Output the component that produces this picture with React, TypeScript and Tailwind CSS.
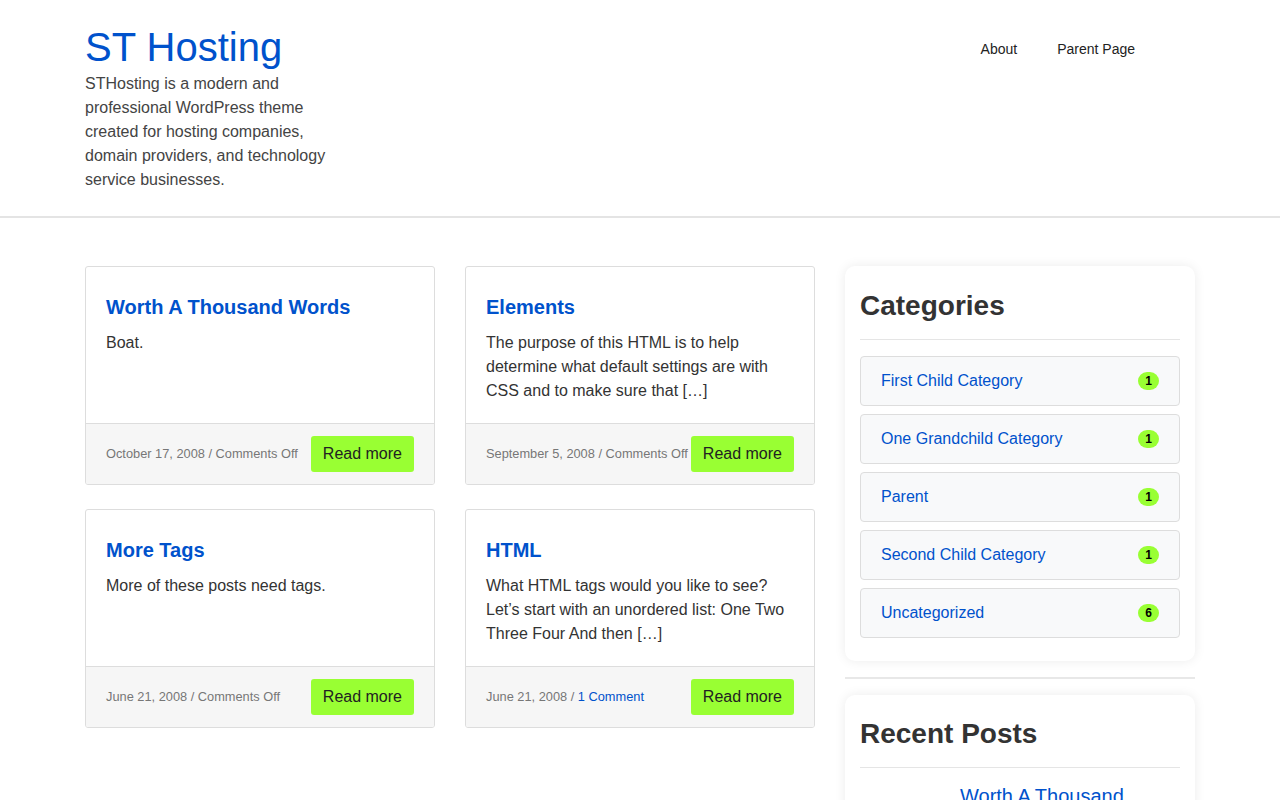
// App.tsx — ST Hosting blog index
const posts = [
  {
    title: 'Worth A Thousand Words',
    excerpt: 'Boat.',
    date: 'October 17, 2008',
    comments: 'Comments Off',
    link: false,
  },
  {
    title: 'Elements',
    excerpt:
      'The purpose of this HTML is to help determine what default settings are with CSS and to make sure that […]',
    date: 'September 5, 2008',
    comments: 'Comments Off',
    link: false,
  },
  {
    title: 'More Tags',
    excerpt: 'More of these posts need tags.',
    date: 'June 21, 2008',
    comments: 'Comments Off',
    link: false,
  },
  {
    title: 'HTML',
    excerpt:
      'What HTML tags would you like to see? Let’s start with an unordered list: One Two Three Four And then […]',
    date: 'June 21, 2008',
    comments: '1 Comment',
    link: true,
  },
];

const categories = [
  { name: 'First Child Category', count: 1 },
  { name: 'One Grandchild Category', count: 1 },
  { name: 'Parent', count: 1 },
  { name: 'Second Child Category', count: 1 },
  { name: 'Uncategorized', count: 6 },
];

function PostCard({ post }: { post: (typeof posts)[number] }) {
  return (
    <article className="flex flex-col border border-[#dddddd] rounded-[3px] bg-white overflow-hidden">
      <div className="flex-1 px-5 pt-[28px] pb-[20px]">
        <h2 className="text-[20px] leading-[24px] font-bold text-[#0052cc] mb-[12px]">
          {post.title}
        </h2>
        <p className="text-[16px] leading-[24px] text-[#333333]">{post.excerpt}</p>
      </div>
      <div className="flex items-center justify-between bg-[#f6f6f6] border-t border-[#dddddd] px-5 py-3">
        <span className="text-[12.8px] text-[#777777] whitespace-nowrap">
          {post.date} /{' '}
          {post.link ? (
            <a className="text-[#0052cc]">{post.comments}</a>
          ) : (
            post.comments
          )}
        </span>
        <button
          type="button"
          className="h-9 px-3 shrink-0 whitespace-nowrap rounded-[3px] bg-[#99ff33] text-[16px] text-[#222222]"
        >
          Read more
        </button>
      </div>
    </article>
  );
}

export default function App() {
  return (
    <div className="min-h-screen bg-white font-['Liberation_Sans',Arial,sans-serif] text-[#333333]">
      {/* header */}
      <header className="border-b-2 border-[#e4e4e4]">
        <div className="mx-auto w-[1110px] flex justify-between pt-[23px] pb-[24px]">
          <div className="w-[260px]">
            <a className="block text-[40px] leading-[48px] text-[#0052cc]">ST Hosting</a>
            <p className="text-[16px] leading-[24px] text-[#444444] mt-px">
              STHosting is a modern and professional WordPress theme created for hosting
              companies, domain providers, and technology service businesses.
            </p>
          </div>
          <nav className="flex gap-10 text-[14px] text-[#222222] pt-4 pr-[60px] h-fit">
            <a>About</a>
            <a>Parent Page</a>
          </nav>
        </div>
      </header>

      {/* content */}
      <main className="mx-auto w-[1110px] pt-12 grid grid-cols-[730px_350px] gap-x-[30px] items-start">
        <div className="grid grid-cols-2 gap-x-[30px] gap-y-6">
          {posts.map((p) => (
            <PostCard key={p.title} post={p} />
          ))}
        </div>

        <aside>
          <section className="bg-white rounded-[10px] shadow-[0_0_12px_rgba(0,0,0,0.08)] px-[15px] pt-[23px] pb-[23px]">
            <h2 className="text-[28px] leading-[34px] font-bold text-[#333333] pb-4 border-b border-[#e5e5e5]">
              Categories
            </h2>
            <ul className="mt-4 flex flex-col gap-2">
              {categories.map((c) => (
                <li
                  key={c.name}
                  className="flex items-center justify-between bg-[#f8f9fa] border border-[#dddddd] rounded-[4px] px-5 py-3"
                >
                  <a className="text-[16px] leading-[24px] text-[#0052cc]">{c.name}</a>
                  <span className="rounded-full bg-[#99ff33] px-[7px] text-[12px] leading-[18px] font-bold text-black">
                    {c.count}
                  </span>
                </li>
              ))}
            </ul>
          </section>

          <hr className="my-4 border-0 border-t-2 border-[#e8e8e8]" />

          <section className="bg-white rounded-[10px] shadow-[0_0_12px_rgba(0,0,0,0.08)] px-[15px] pt-[22px] pb-6">
            <h2 className="text-[28px] leading-[34px] font-bold text-[#333333] pb-4 border-b border-[#e5e5e5]">
              Recent Posts
            </h2>
            <ul className="mt-4 flex flex-col gap-4">
              <li className="flex gap-[15px]">
                <div className="w-[85px] h-[60px] shrink-0" />
                <a className="text-[20px] leading-[24px] text-[#0052cc]">Worth A Thousand Words</a>
              </li>
            </ul>
          </section>
        </aside>
      </main>
    </div>
  );
}
